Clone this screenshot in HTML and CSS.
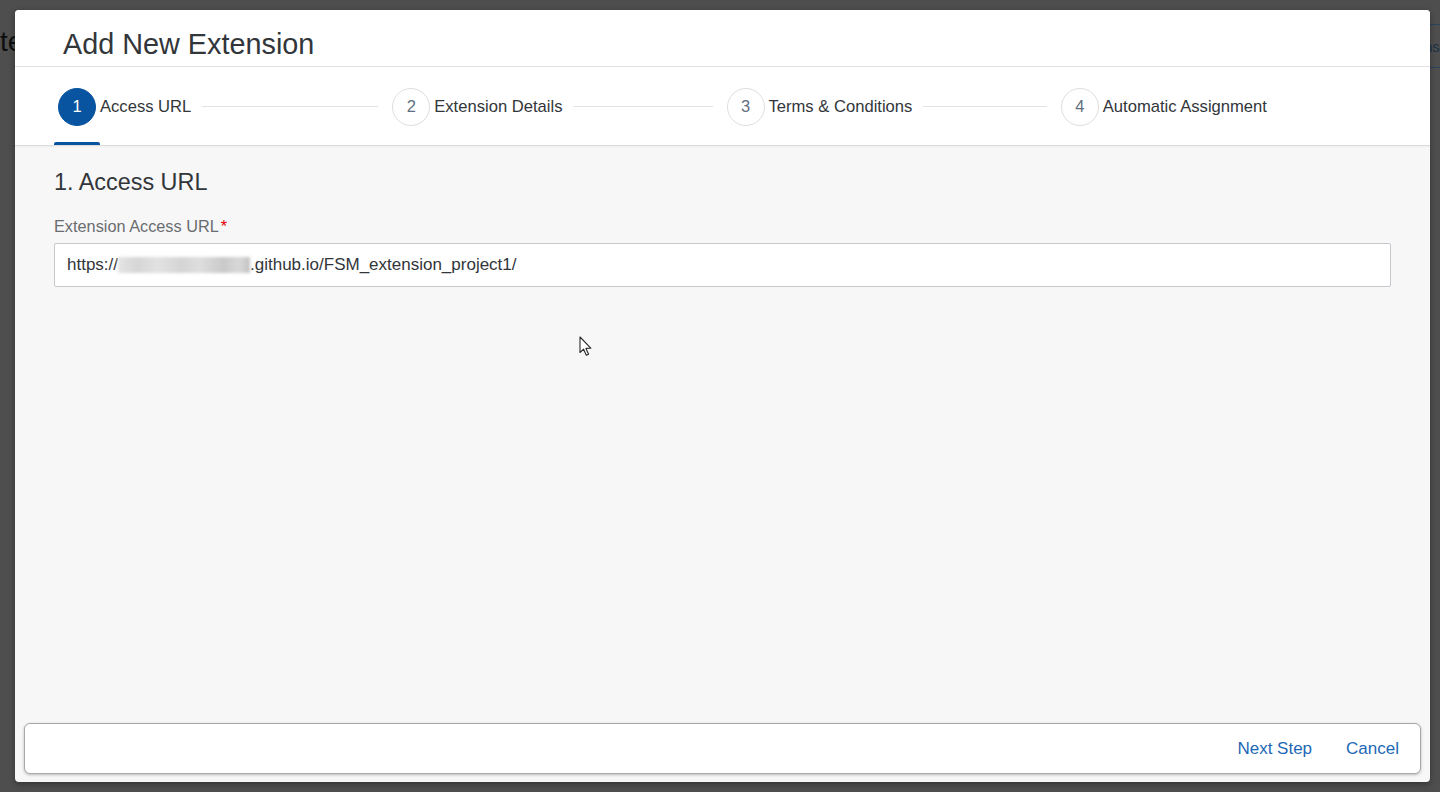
FILE: index.html
```html
<!DOCTYPE html>
<html lang="en">
<head>
<meta charset="utf-8">
<title>Add New Extension</title>
<link rel="stylesheet" href="styles.css">
</head>
<body>
<div class="backdrop">
  <span class="bg-title">te</span>
  <div class="bg-button"><span>ns</span></div>
</div>

<div class="dialog" role="dialog" aria-label="Add New Extension">
  <header class="dialog-header">
    <h1 class="dialog-title">Add New Extension</h1>
  </header>

  <nav class="wizard-nav">
    <div class="step step-active">
      <span class="step-num">1</span>
      <span class="step-label">Access URL</span>
      <span class="step-line"></span>
    </div>
    <div class="step">
      <span class="step-num">2</span>
      <span class="step-label">Extension Details</span>
      <span class="step-line"></span>
    </div>
    <div class="step">
      <span class="step-num">3</span>
      <span class="step-label">Terms &amp; Conditions</span>
      <span class="step-line"></span>
    </div>
    <div class="step">
      <span class="step-num">4</span>
      <span class="step-label">Automatic Assignment</span>
    </div>
  </nav>

  <main class="dialog-content">
    <h2 class="section-title">1. Access URL</h2>
    <label class="field-label">Extension Access URL<span class="required">*</span></label>
    <div class="field-input">
      <span class="url-text">https://</span><span class="blurred"></span><span class="url-text">.github.io/FSM_extension_project1/</span>
    </div>
  </main>

  <footer class="dialog-footer">
    <button class="footer-btn">Next Step</button>
    <button class="footer-btn">Cancel</button>
  </footer>
</div>

<svg class="cursor" width="14" height="21" viewBox="0 0 14 21" aria-hidden="true">
  <path d="M1 1 L1 16.5 L4.6 13.2 L7.3 19.3 L9.6 18.3 L6.9 12.4 L11.8 12.2 Z" fill="#ffffff" stroke="#2b2b2b" stroke-width="1.1" stroke-linejoin="round"/>
</svg>
</body>
</html>
```

FILE: styles.css
```css
* { box-sizing: border-box; }

html, body {
  margin: 0;
  padding: 0;
  width: 1440px;
  height: 792px;
  overflow: hidden;
}

body {
  background: #4e4e4e;
  font-family: "Liberation Sans", Arial, sans-serif;
  color: #32363a;
  position: relative;
}

.backdrop {
  position: absolute;
  inset: 0;
}

.bg-title {
  position: absolute;
  left: 0;
  top: 26px;
  font-size: 28px;
  color: #0e0e0e;
}

.bg-button {
  position: absolute;
  left: 1400px;
  top: 24px;
  width: 40px;
  height: 44px;
  border-top: 1px solid #2c4560;
  border-bottom: 1px solid #2c4560;
  display: flex;
  align-items: center;
  padding-left: 24px;
  font-size: 15px;
  color: #1b3048;
  overflow: hidden;
}

.dialog {
  position: absolute;
  left: 15px;
  top: 10px;
  width: 1415px;
  height: 772px;
  background: #f7f7f7;
  border-radius: 4px;
  overflow: hidden;
  display: flex;
  flex-direction: column;
  box-shadow: 0 2px 6px rgba(0, 0, 0, 0.35);
}

.dialog-header {
  height: 57px;
  flex: none;
  background: #ffffff;
  border-bottom: 1px solid #e2e2e2;
  padding: 18px 0 0 48px;
}

.dialog-title {
  margin: 0;
  font-size: 28.8px;
  line-height: 33px;
  font-weight: normal;
  color: #32363a;
}

.wizard-nav {
  height: 78px;
  flex: none;
  background: #ffffff;
  display: flex;
  padding: 0 39px;
  box-shadow: 0 1px 0 #dcdcdc, 0 2px 2px rgba(0, 0, 0, 0.04);
  position: relative;
  z-index: 1;
}

.step {
  flex: 1 1 0;
  display: flex;
  align-items: center;
  padding-left: 4px;
  padding-top: 1px;
  position: relative;
  min-width: 0;
}

.step-num {
  width: 38px;
  height: 38px;
  flex: none;
  border-radius: 50%;
  border: 1px solid #dedede;
  background: #ffffff;
  color: #5f6f80;
  font-size: 16.5px;
  display: flex;
  align-items: center;
  justify-content: center;
}

.step-label {
  margin-left: 4px;
  font-size: 16.6px;
  color: #32363a;
  white-space: nowrap;
}

.step-line {
  flex: 1;
  height: 1px;
  background: #e3e3e3;
  margin: 0 10px 0 11px;
}

.step-active .step-num {
  background: #0854a0;
  border-color: #0854a0;
  color: #ffffff;
}

.step-active::after {
  content: "";
  position: absolute;
  left: 0;
  bottom: 0;
  width: 46px;
  height: 3px;
  background: #0854a0;
  border-radius: 2px 2px 0 0;
}

.dialog-content {
  flex: 1;
  padding: 24px 39px 0;
}

.section-title {
  margin: 0 0 22px;
  font-size: 23.4px;
  line-height: 26px;
  font-weight: normal;
  color: #32363a;
}

.field-label {
  display: block;
  font-size: 16.3px;
  line-height: 18px;
  color: #6a6d70;
  margin-bottom: 8px;
}

.required {
  color: #e00000;
  margin-left: 2px;
}

.field-input {
  height: 44px;
  background: #ffffff;
  border: 1px solid #c4c7cb;
  border-radius: 2px;
  padding-left: 12px;
  display: flex;
  align-items: center;
  font-size: 17px;
  color: #32363a;
  white-space: nowrap;
}

.blurred {
  display: inline-block;
  width: 132px;
  height: 16px;
  background: linear-gradient(90deg, #e4e4e4 0%, #d6d6d6 15%, #e2e2e2 30%, #d4d4d4 48%, #dedede 62%, #c9c9c9 80%, #d8d8d8 92%, #c2c2c2 100%);
  filter: blur(1.5px);
}

.dialog-footer {
  flex: none;
  height: 51px;
  margin: 0 9px 8px;
  background: #ffffff;
  border: 1px solid #a8a8a8;
  border-radius: 6px;
  box-shadow: 0 1px 3px rgba(0, 0, 0, 0.25);
  display: flex;
  align-items: center;
  justify-content: flex-end;
  padding-right: 10px;
  gap: 12px;
}

.footer-btn {
  font-family: "Liberation Sans", Arial, sans-serif;
  font-size: 17px;
  color: #1d68b6;
  background: none;
  border: none;
  padding: 0 11px;
  height: 36px;
  cursor: pointer;
}

.cursor {
  position: absolute;
  left: 579px;
  top: 336px;
}
```
